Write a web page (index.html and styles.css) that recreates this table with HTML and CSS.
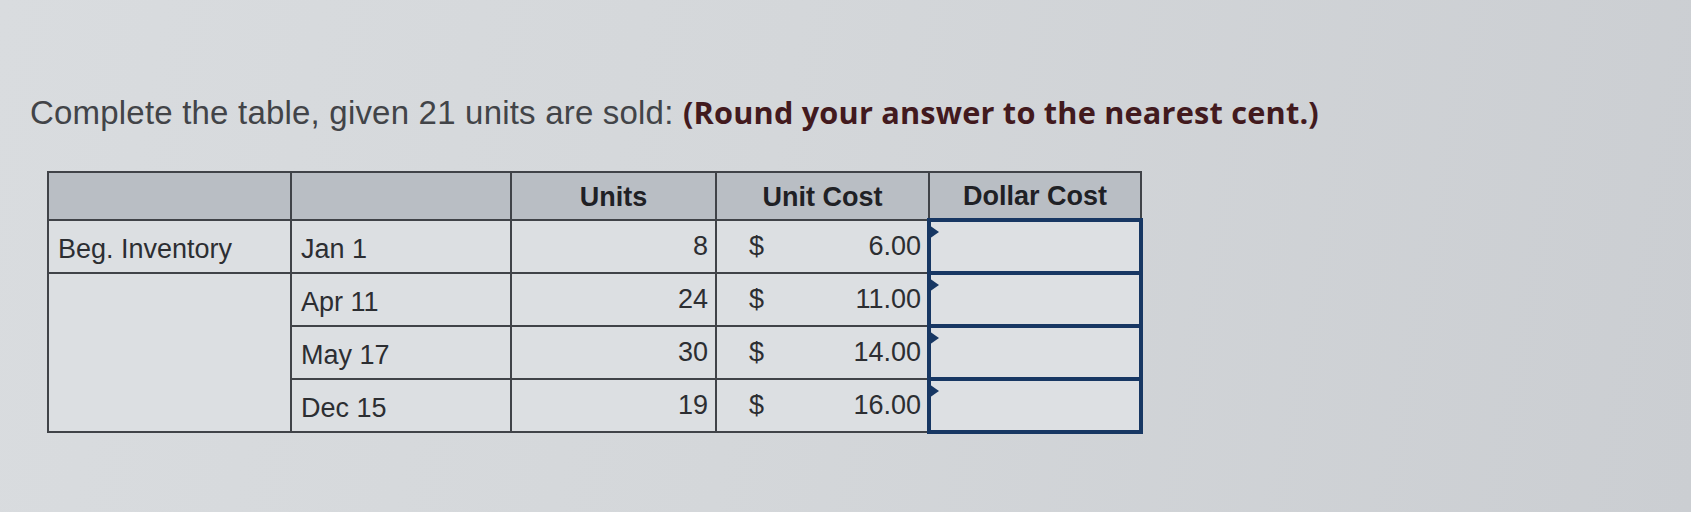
FILE: index.html
```html
<!DOCTYPE html>
<html lang="en">
<head>
<meta charset="utf-8">
<title>Inventory table</title>
<link rel="stylesheet" href="styles.css">
</head>
<body>
<div class="page">
  <p class="prompt">Complete the table, given 21 units are sold: <strong class="hint">(Round your answer to the nearest cent.)</strong></p>
  <table class="inv">
    <colgroup>
      <col class="c-label"><col class="c-date"><col class="c-units"><col class="c-cost"><col class="c-dollar">
    </colgroup>
    <thead>
      <tr>
        <th></th><th></th><th>Units</th><th>Unit Cost</th><th>Dollar Cost</th>
      </tr>
    </thead>
    <tbody>
      <tr>
        <td class="label">Beg. Inventory</td>
        <td class="date">Jan 1</td>
        <td class="num">8</td>
        <td class="cost"><span class="cur">$</span><span class="val">6.00</span></td>
        <td class="entry"><div class="box"></div></td>
      </tr>
      <tr>
        <td class="label" rowspan="3"></td>
        <td class="date">Apr 11</td>
        <td class="num">24</td>
        <td class="cost"><span class="cur">$</span><span class="val">11.00</span></td>
        <td class="entry"><div class="box"></div></td>
      </tr>
      <tr>
        <td class="date">May 17</td>
        <td class="num">30</td>
        <td class="cost"><span class="cur">$</span><span class="val">14.00</span></td>
        <td class="entry"><div class="box"></div></td>
      </tr>
      <tr>
        <td class="date">Dec 15</td>
        <td class="num">19</td>
        <td class="cost"><span class="cur">$</span><span class="val">16.00</span></td>
        <td class="entry"><div class="box"></div></td>
      </tr>
    </tbody>
  </table>
</div>
</body>
</html>
```

FILE: styles.css
```css
html, body {
  margin: 0;
  padding: 0;
}
body {
  width: 1691px;
  height: 512px;
  overflow: hidden;
  background: linear-gradient(100deg, #d9dcdf 0%, #d4d7da 45%, #cbced2 100%);
  font-family: "Liberation Sans", Arial, sans-serif;
  color: #2e3034;
}
.page {
  padding: 92px 0 0 30px;
}
.prompt {
  margin: 0;
  font-size: 33px;
  line-height: 40px;
  color: #424448;
  letter-spacing: 0.2px;
}
.hint {
  font-family: "Open Sans", "Noto Sans", sans-serif;
  font-weight: 700;
  font-size: 30.7px;
  color: #421a1e;
}
.inv {
  margin: 38px 0 0 17px;
  border-collapse: collapse;
  table-layout: fixed;
  width: 1093px;
  font-size: 27px;
}
.c-label { width: 243px; }
.c-date { width: 220px; }
.c-units { width: 205px; }
.c-cost { width: 213px; }
.c-dollar { width: 212px; }
.inv th, .inv td {
  box-sizing: border-box;
}
.inv th {
  height: 48px;
  background: #b9bec4;
  border: 2px solid #404348;
  font-weight: 700;
  font-size: 27px;
  color: #1f2125;
  text-align: center;
  vertical-align: middle;
  padding: 2px 0 0;
}
.inv td {
  height: 53px;
  padding: 0 10px;
  background: #dcdfe2;
  border: 2px solid #404348;
  color: #2c2e32;
  vertical-align: middle;
  white-space: nowrap;
}
.inv td.label, .inv td.date {
  padding-top: 6px;
  padding-left: 9px;
}
.inv td.label[rowspan] {
  vertical-align: top;
}
.inv td.num {
  text-align: right;
  padding-right: 7px;
}
.inv td.cost {
  padding-left: 32px;
  padding-right: 6px;
}
.cur {
  float: left;
}
.val {
  float: right;
}
.inv td.entry {
  padding: 0;
  border: 4px solid #173763;
  background: #dde0e3;
}
.box {
  position: relative;
  height: 45px;
}
.box::before {
  content: "";
  position: absolute;
  left: -2px;
  top: 1px;
  border-top: 7px solid transparent;
  border-bottom: 7px solid transparent;
  border-left: 10px solid #173763;
}
```
